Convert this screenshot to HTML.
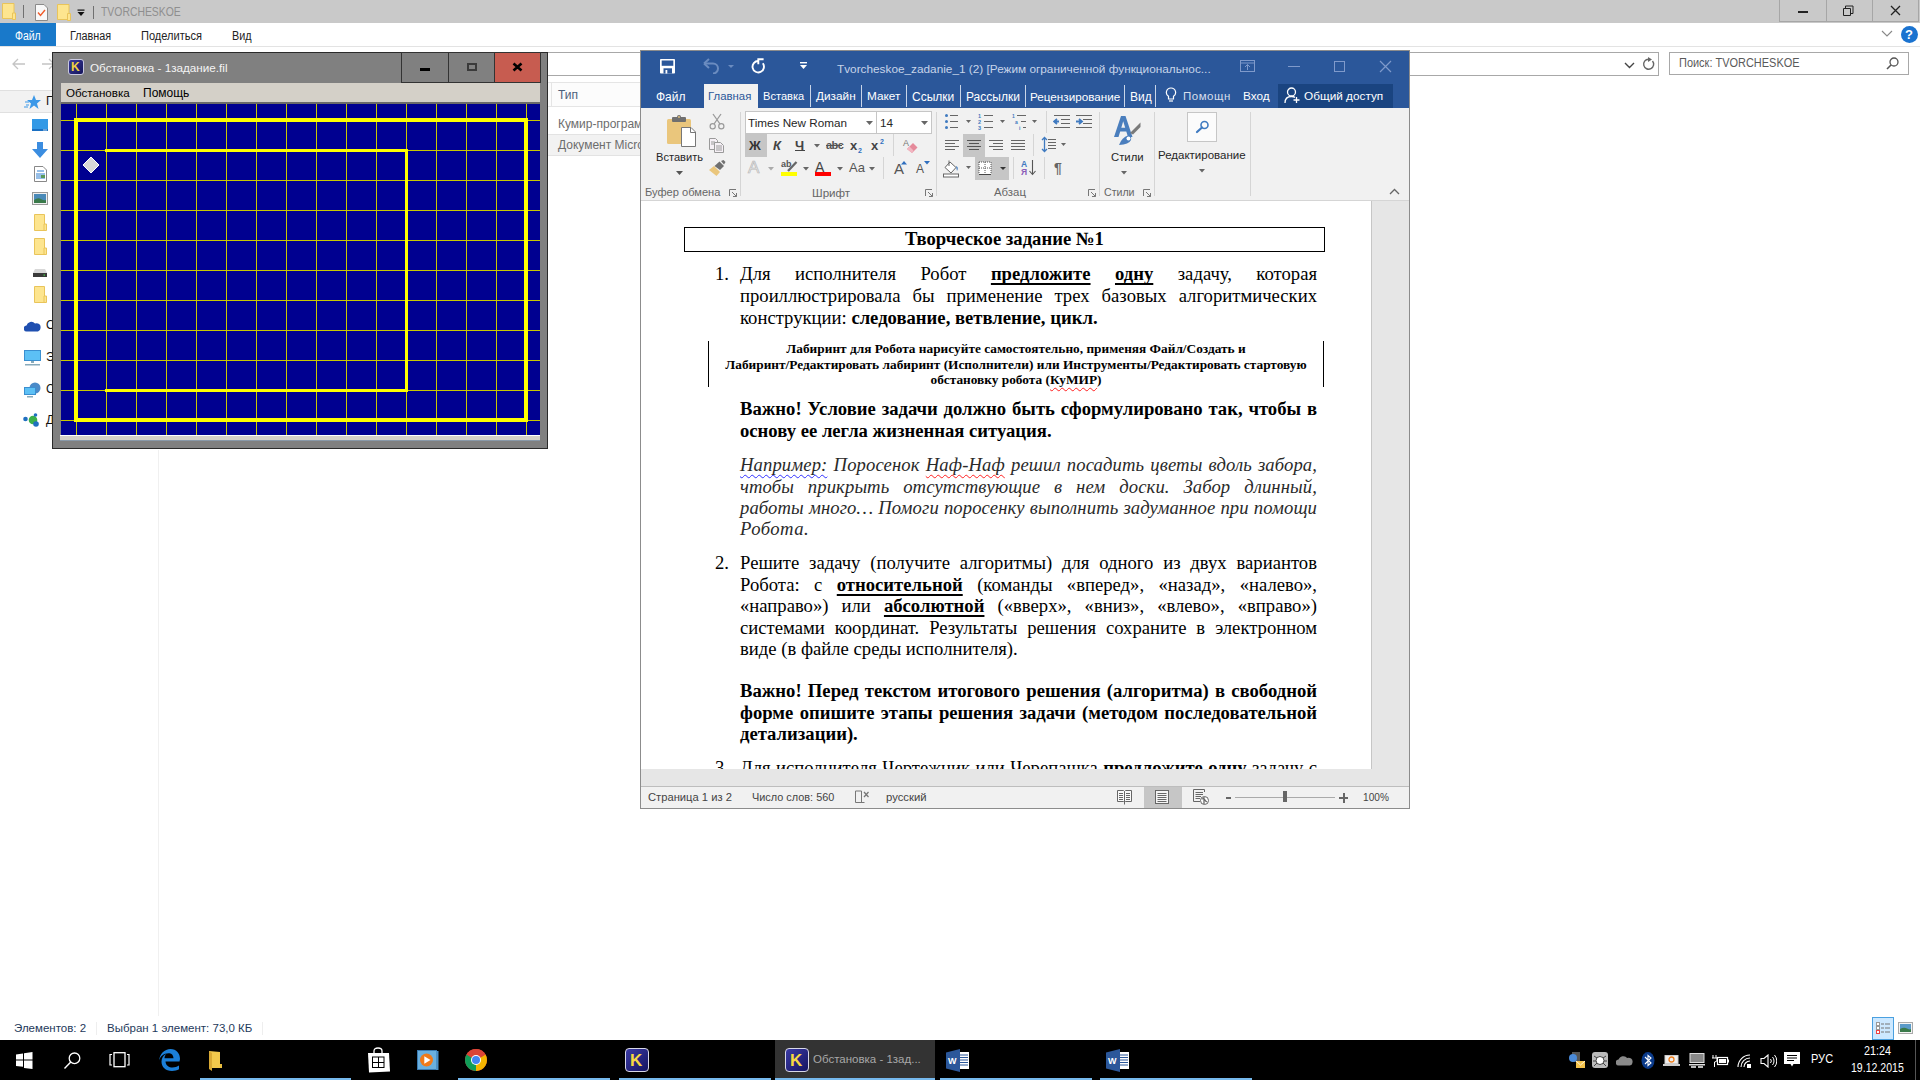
<!DOCTYPE html>
<html><head><meta charset="utf-8">
<style>
*{box-sizing:border-box;margin:0;padding:0}
html,body{width:1920px;height:1080px;overflow:hidden;background:#fff;font-family:"Liberation Sans",sans-serif;font-size:12px;color:#000}
.a{position:absolute}
.t{position:absolute;white-space:nowrap;line-height:1}
</style></head><body>
<!-- EXPLORER -->
<div class="a" style="left:0;top:0;width:1920px;height:23px;background:#c9c9c9"></div>
<svg class="a" style="left:1px;top:2px" width="100" height="19" viewBox="0 0 100 19">
<path d="M1.5 1.5H13V16.5H1.5Z" fill="#fde58f" stroke="#e9c45a"/><path d="M11.5 11H14.5V17.5H11.5Z" fill="#fde58f" stroke="#e9c45a"/>
<rect x="22" y="3" width="1" height="13" fill="#707070"/>
<path d="M34.5 2.5H43L46.5 6V18.5H34.5Z" fill="#f8f8f8" stroke="#8a8a8a"/><path d="M37 10.5L39.5 13.5L44 8" fill="none" stroke="#f05a28" stroke-width="1.4"/>
<path d="M56.5 2.5H68V17.5H56.5Z" fill="#fde58f" stroke="#e9c45a"/><path d="M66.5 11.5H69.5V18.5H66.5Z" fill="#fde58f" stroke="#e9c45a"/>
<rect x="76.5" y="7.5" width="7" height="1.2" fill="#111"/><path d="M76.5 10H83.5L80 14Z" fill="#111"/>
<rect x="92" y="4" width="1" height="13" fill="#707070"/>
</svg>
<div class="t" style="left:101px;top:5px;font-size:13px;color:#8f8f8f;transform:scaleX(0.8);transform-origin:0 0">TVORCHESKOE</div>
<!-- explorer window buttons -->
<div class="a" style="left:1779px;top:0;width:140px;height:22px;border:1px solid #a6a6a6;border-top:none"></div>
<div class="a" style="left:1826px;top:0;width:1px;height:22px;background:#a6a6a6"></div>
<div class="a" style="left:1872px;top:0;width:1px;height:22px;background:#a6a6a6"></div>
<div class="a" style="left:1798px;top:11px;width:10px;height:1.5px;background:#222"></div>
<svg class="a" style="left:1843px;top:5px" width="11" height="11" viewBox="0 0 11 11"><path d="M0.5 3.5H7.5V10.5H0.5Z" fill="none" stroke="#222"/><path d="M2.5 3.5V1H10V8.5H7.5" fill="none" stroke="#222"/></svg>
<svg class="a" style="left:1890px;top:5px" width="11" height="11" viewBox="0 0 11 11"><path d="M1 1L10 10M10 1L1 10" stroke="#222" stroke-width="1.3"/></svg>
<!-- ribbon tabs -->
<div class="a" style="left:0;top:23px;width:1920px;height:24px;background:#fff;border-bottom:1px solid #e3e3e3"></div>
<div class="a" style="left:0;top:23px;width:56px;height:23px;background:#1979ca"></div>
<div class="t" style="left:15px;top:30px;font-size:12px;color:#fff;transform:scaleX(0.87);transform-origin:0 0">Файл</div>
<div class="t" style="left:70px;top:30px;font-size:12px;color:#222;transform:scaleX(0.9);transform-origin:0 0">Главная</div>
<div class="t" style="left:141px;top:30px;font-size:12px;color:#222;transform:scaleX(0.92);transform-origin:0 0">Поделиться</div>
<div class="t" style="left:232px;top:30px;font-size:12px;color:#222;transform:scaleX(0.9);transform-origin:0 0">Вид</div>
<svg class="a" style="left:1881px;top:30px" width="12" height="7" viewBox="0 0 12 7"><path d="M1 1L6 6L11 1" fill="none" stroke="#888" stroke-width="1.1"/></svg>
<div class="a" style="left:1901px;top:26px;width:17px;height:17px;border-radius:50%;background:#1a73d0"></div>
<div class="t" style="left:1905px;top:28px;font-size:13px;font-weight:bold;color:#fff">?</div>
<!-- address -->
<svg class="a" style="left:12px;top:57px" width="42" height="14" viewBox="0 0 42 14"><path d="M1 7H13M6 2L1 7L6 12" fill="none" stroke="#c4c4c4" stroke-width="1.3"/><path d="M30 7H42M37 2L42 7L37 12" fill="none" stroke="#c4c4c4" stroke-width="1.3"/></svg>
<div class="a" style="left:540px;top:52px;width:1119px;height:24px;border:1px solid #a8a8a8;border-left:none"></div>
<svg class="a" style="left:1624px;top:62px" width="11" height="7" viewBox="0 0 11 7"><path d="M1 1L5.5 5.5L10 1" fill="none" stroke="#444" stroke-width="1.4"/></svg>
<svg class="a" style="left:1642px;top:57px" width="13" height="14" viewBox="0 0 13 14"><path d="M10.5 4A5 5 0 1 1 6.5 2.2" fill="none" stroke="#666" stroke-width="1.4"/><path d="M6 0L10 2.5L6 5Z" fill="#666"/></svg>
<div class="a" style="left:1669px;top:52px;width:240px;height:23px;border:1px solid #a8a8a8"></div>
<div class="t" style="left:1679px;top:57px;font-size:12.5px;color:#5a5a5a;transform:scaleX(0.877);transform-origin:0 0">Поиск: TVORCHESKOE</div>
<svg class="a" style="left:1886px;top:57px" width="13" height="13" viewBox="0 0 13 13"><circle cx="8" cy="5" r="4" fill="none" stroke="#555" stroke-width="1.3"/><path d="M5 8L1 12" stroke="#555" stroke-width="1.6"/></svg>
<!-- nav pane -->
<div class="a" style="left:158px;top:450px;width:1px;height:566px;background:#f0f0f0"></div>
<div class="a" style="left:0;top:90px;width:60px;height:23px;background:#f2f2f2;border:1px solid #e0e0e0;border-left:none"></div>
<svg class="a" style="left:24px;top:94px" width="18" height="16" viewBox="0 0 18 16"><path d="M10 1L12 6H17L13 9.5L14.5 15L10 11.5L5.5 15L7 9.5L3 6H8Z" fill="#3b98e8"/><path d="M1 8H5M2 11H5M0 13H4" stroke="#3b98e8" stroke-width="1"/></svg>
<div class="t" style="left:46px;top:95px;font-size:12px;color:#111">П</div>
<svg class="a" style="left:32px;top:119px" width="16" height="14" viewBox="0 0 16 14"><rect x="0" y="0" width="16" height="12" fill="#3399e6"/><rect x="0" y="10" width="16" height="2" fill="#1a6fc2"/><circle cx="12" cy="11" r="0.7" fill="#fff"/><circle cx="14" cy="11" r="0.7" fill="#fff"/></svg>
<svg class="a" style="left:32px;top:142px" width="16" height="16" viewBox="0 0 16 16"><path d="M5 0H11V7H16L8 16L0 7H5Z" fill="#3b8de0"/></svg>
<svg class="a" style="left:34px;top:166px" width="13" height="16" viewBox="0 0 13 16"><path d="M0.5 0.5H9L12.5 4V15.5H0.5Z" fill="#fff" stroke="#888"/><path d="M3 5H10M2 8H11M2 10H7M2 12H11" stroke="#2f7fd0"/><rect x="7" y="9" width="4" height="3" fill="#5a9a5a"/></svg>
<svg class="a" style="left:32px;top:192px" width="16" height="13" viewBox="0 0 16 13"><rect x="0.5" y="0.5" width="15" height="12" fill="#f0f0f0" stroke="#999"/><rect x="2" y="2" width="12" height="9" fill="#4a8ab8"/><path d="M2 8Q6 5 9 7T14 8V11H2Z" fill="#3a7a4a"/></svg>
<svg class="a" style="left:34px;top:214px" width="13" height="17" viewBox="0 0 13 17"><path d="M0.5 0.5H10.5V16.5H0.5Z" fill="#fde58f" stroke="#e9c45a"/><path d="M10 10H12.5V16.5H10Z" fill="#fde58f" stroke="#e9c45a"/></svg>
<svg class="a" style="left:34px;top:238px" width="13" height="17" viewBox="0 0 13 17"><path d="M0.5 0.5H10.5V16.5H0.5Z" fill="#fde58f" stroke="#e9c45a"/><path d="M10 10H12.5V16.5H10Z" fill="#fde58f" stroke="#e9c45a"/></svg>
<svg class="a" style="left:33px;top:268px" width="14" height="10" viewBox="0 0 14 10"><path d="M2 1H12L14 5V9H0V5Z" fill="#d8d8d8"/><rect x="0" y="5" width="14" height="4" fill="#3a3a3a"/><rect x="10.5" y="6.5" width="1.5" height="1.2" fill="#4c4"/></svg>
<svg class="a" style="left:34px;top:286px" width="13" height="17" viewBox="0 0 13 17"><path d="M0.5 0.5H10.5V16.5H0.5Z" fill="#fde58f" stroke="#e9c45a"/><path d="M10 10H12.5V16.5H10Z" fill="#fde58f" stroke="#e9c45a"/></svg>
<svg class="a" style="left:24px;top:319px" width="17" height="13" viewBox="0 0 17 13"><path d="M3 12.5A3 3 0 0 1 2.5 6.5A5 5 0 0 1 11 4.5A4 4 0 0 1 16.5 9A3.5 3.5 0 0 1 14 12.5Z" fill="#1f4fb0"/></svg>
<div class="t" style="left:46px;top:319px;font-size:12px;color:#111">О</div>
<svg class="a" style="left:24px;top:350px" width="17" height="16" viewBox="0 0 17 16"><rect x="0.5" y="0.5" width="16" height="10" fill="#5cc0f5" stroke="#3a8fd0"/><rect x="7" y="11" width="3" height="2" fill="#8ab"/><rect x="1" y="14" width="15" height="1.5" fill="#8ab"/></svg>
<div class="t" style="left:46px;top:351px;font-size:12px;color:#111">Э</div>
<svg class="a" style="left:24px;top:382px" width="17" height="16" viewBox="0 0 17 16"><circle cx="11" cy="6" r="5.5" fill="#4a8ac8"/><rect x="0.5" y="5.5" width="11" height="7" fill="#5cc0f5" stroke="#3a8fd0"/><rect x="3" y="14" width="6" height="1.5" fill="#8ab"/></svg>
<div class="t" style="left:46px;top:383px;font-size:12px;color:#111">С</div>
<svg class="a" style="left:23px;top:413px" width="18" height="14" viewBox="0 0 18 14"><circle cx="2.5" cy="6" r="2.3" fill="#1f6fc0"/><circle cx="10" cy="7" r="4.3" fill="#3cb04a"/><circle cx="12.5" cy="2" r="1.8" fill="#1f6fc0"/><circle cx="13" cy="11" r="2.8" fill="#1f6fc0"/></svg>
<div class="t" style="left:46px;top:414px;font-size:12px;color:#111">Д</div>
<!-- column header & rows -->
<div class="a" style="left:548px;top:82px;width:92px;height:25px;background:#fcfcfc;border-top:1px solid #e5e5e5;border-bottom:1px solid #e5e5e5"></div>
<div class="a" style="left:551px;top:82px;width:1px;height:24px;background:#e5e5e5"></div>
<div class="t" style="left:558px;top:89px;font-size:12px;color:#4c607a">Тип</div>
<div class="t" style="left:558px;top:118px;font-size:12px;color:#6d6d6d">Кумир-программа</div>
<div class="a" style="left:548px;top:134px;width:92px;height:22px;background:#f2f2f2;border-top:1px solid #e3e3e3;border-bottom:1px solid #e3e3e3"></div>
<div class="t" style="left:558px;top:139px;font-size:12px;color:#6d6d6d">Документ Microsoft</div>
<!-- status -->
<div class="t" style="left:14px;top:1023px;font-size:11.5px;color:#1e395b">Элементов: 2</div>
<div class="a" style="left:96px;top:1022px;width:1px;height:13px;background:#eee"></div>
<div class="t" style="left:107px;top:1023px;font-size:11.5px;color:#1e395b">Выбран 1 элемент: 73,0 КБ</div>
<div class="a" style="left:262px;top:1022px;width:1px;height:13px;background:#eee"></div>
<div class="a" style="left:1872px;top:1017px;width:22px;height:23px;background:#cce8ff;border:1px solid #4aa0e0"></div>
<svg class="a" style="left:1876px;top:1022px" width="14" height="12" viewBox="0 0 14 12"><rect x="0.5" y="0.5" width="3" height="3" fill="#fff" stroke="#999"/><rect x="0.5" y="4.5" width="3" height="3" fill="#fff" stroke="#999"/><rect x="0.5" y="8.5" width="3" height="3" fill="#fff" stroke="#e44"/><path d="M5 2H8M9 2H14M5 6H8M9 6H14M5 10H8M9 10H14" stroke="#777"/></svg>
<svg class="a" style="left:1898px;top:1022px" width="15" height="12" viewBox="0 0 15 12"><rect x="0.5" y="0.5" width="14" height="11" fill="#f4f4f4" stroke="#aaa"/><rect x="2" y="2" width="11" height="8" fill="#5a9ac8"/><path d="M2 7Q6 5 9 6.5T13 7V10H2Z" fill="#3a7a4a"/></svg>
<!-- TASKBAR -->
<div class="a" style="left:0;top:1040px;width:1920px;height:40px;background:#000"></div>
<svg class="a" style="left:16px;top:1052px" width="17" height="17" viewBox="0 0 17 17"><path d="M0 2.4L7 1.5V7.6H0Z M8 1.3L16.5 0V7.6H8Z M0 8.6H7V14.8L0 14Z M8 8.6H16.5V17L8 15.9Z" fill="#fff"/></svg>
<svg class="a" style="left:63px;top:1051px" width="19" height="19" viewBox="0 0 19 19"><circle cx="11.5" cy="7.3" r="5.3" fill="none" stroke="#fff" stroke-width="1.3"/><path d="M7.8 11L1.5 17.5" stroke="#fff" stroke-width="1.4"/></svg>
<svg class="a" style="left:109px;top:1052px" width="22" height="16" viewBox="0 0 22 16"><rect x="5" y="0.7" width="11" height="14" fill="none" stroke="#fff" stroke-width="1.3"/><path d="M3 2.5H1V13H3M18 2.5H20V13H18" fill="none" stroke="#fff" stroke-width="1.2"/></svg>
<svg class="a" style="left:159px;top:1049px" width="22" height="22" viewBox="0 0 22 22"><path d="M20.5 12.5H6.5C6.8 16.5 10 18.5 13.5 18.5C16 18.5 18.2 17.7 20 16.5V20.3C18 21.4 15.8 22 13 22C6.5 22 2.5 18 2.5 12.5C2.5 9 4.5 6 7.5 4.8C6 6.2 5.5 8 5.5 9.3H14.5C14.5 6.5 12.8 4.5 10.5 4.2C4.8 3.8 1 7.5 0.2 11.5C0.6 5 5.5 0 11.5 0C17.5 0 21 4.5 21 10Z" fill="#1b7fd8"/></svg>
<svg class="a" style="left:207px;top:1050px" width="17" height="22" viewBox="0 0 17 22"><path d="M2 1L13 2V18H2Z" fill="#f2c94c"/><path d="M2 1L5 3V21L2 19Z" fill="#d9a934"/><path d="M13 14H15V18H13Z" fill="#e9bd40"/></svg>
<div class="a" style="left:200px;top:1078px;width:151px;height:2px;background:#76b9ed"></div>
<svg class="a" style="left:367px;top:1047px" width="24" height="26" viewBox="0 0 24 26"><path d="M1 6H22L23 24.5L2 25.5Z" fill="#fff"/><path d="M7 6V4Q7 1 11 1Q15 1 15 4V6" fill="none" stroke="#fff" stroke-width="1.3"/><rect x="5" y="9.5" width="12.5" height="11.5" fill="#000"/><path d="M6 10.5H11V15H6ZM12 10.5H16.5V15H12ZM6 16H11V20H6ZM12 16H16.5V20H12Z" fill="#fff"/></svg>
<svg class="a" style="left:417px;top:1050px" width="22" height="21" viewBox="0 0 22 21"><rect x="0.5" y="0.5" width="19" height="19" fill="#6ab0e0" stroke="#3a7ab0"/><rect x="19" y="1" width="2.5" height="19" fill="#4a90c8"/><circle cx="9.5" cy="10" r="6.5" fill="#f07a1a"/><path d="M7.3 6.3L13.5 10L7.3 13.7Z" fill="#fff"/></svg>
<svg class="a" style="left:465px;top:1049px" width="22" height="22" viewBox="0 0 22 22"><circle cx="11" cy="11" r="11" fill="#db4437"/><path d="M11 11L1.5 5.5A11 11 0 0 0 11 22Z" fill="#0f9d58"/><path d="M11 11L11 22A11 11 0 0 0 20.5 5.5Z" fill="#f4b400"/><path d="M11 11L1.5 5.5A11 11 0 0 1 20.5 5.5Z" fill="#db4437"/><circle cx="11" cy="11" r="5" fill="#fff"/><circle cx="11" cy="11" r="4" fill="#4285f4"/></svg>
<div class="a" style="left:458px;top:1078px;width:152px;height:2px;background:#76b9ed"></div>
<div class="a" style="left:625px;top:1048px;width:24px;height:24px;border-radius:4px;background:linear-gradient(135deg,#3a3aa5,#151560);border:1.5px solid #d8d8e8"></div>
<div class="t" style="left:630px;top:1052px;font-size:17px;font-weight:bold;color:#f5d742">K</div>
<div class="a" style="left:619px;top:1078px;width:152px;height:2px;background:#76b9ed"></div>
<div class="a" style="left:775px;top:1040px;width:160px;height:40px;background:#333"></div>
<div class="a" style="left:785px;top:1048px;width:24px;height:24px;border-radius:4px;background:linear-gradient(135deg,#3a3aa5,#151560);border:1.5px solid #d8d8e8"></div>
<div class="t" style="left:790px;top:1052px;font-size:17px;font-weight:bold;color:#f5d742">K</div>
<div class="t" style="left:813px;top:1054px;font-size:11.5px;color:#a8a8a8">Обстановка - 1зад...</div>
<div class="a" style="left:775px;top:1078px;width:160px;height:2px;background:#76b9ed"></div>
<svg class="a" style="left:946px;top:1049px" width="24" height="23" viewBox="0 0 24 23"><path d="M9 3H23V20H9Z" fill="#fff"/><path d="M11 6H22M11 8.5H22M11 11H22M11 13.5H22M11 16H22" stroke="#2b579a" stroke-width="1"/><path d="M0 3.5L14 0V23L0 19.5Z" fill="#2b579a"/><text x="2" y="15" font-size="9" font-weight="bold" font-family="Liberation Sans" fill="#fff">W</text></svg>
<div class="a" style="left:940px;top:1078px;width:152px;height:2px;background:#76b9ed"></div>
<svg class="a" style="left:1106px;top:1049px" width="24" height="23" viewBox="0 0 24 23"><path d="M9 3H23V20H9Z" fill="#fff"/><path d="M11 6H22M11 8.5H22M11 11H22M11 13.5H22M11 16H22" stroke="#2b579a" stroke-width="1"/><path d="M0 3.5L14 0V23L0 19.5Z" fill="#2b579a"/><text x="2" y="15" font-size="9" font-weight="bold" font-family="Liberation Sans" fill="#fff">W</text></svg>
<div class="a" style="left:1100px;top:1078px;width:152px;height:2px;background:#76b9ed"></div>
<!-- tray -->
<svg class="a" style="left:1568px;top:1052px" width="17" height="16" viewBox="0 0 17 16"><rect x="4" y="0" width="8" height="10" fill="#555"/><circle cx="5" cy="6" r="4" fill="#4a8ad8"/><rect x="8" y="9" width="9" height="7" fill="#f3c24a"/><path d="M8 9L12.5 13L17 9" fill="none" stroke="#fff" stroke-width="0.8"/></svg>
<svg class="a" style="left:1592px;top:1052px" width="16" height="16" viewBox="0 0 16 16"><rect x="0" y="0" width="16" height="16" rx="3" fill="#bbb"/><circle cx="8" cy="8.5" r="4" fill="#fff" stroke="#444"/><path d="M2 4L5 6M14 4L11 6M1 9H4M15 9H12M2 14L5 11M14 14L11 11" stroke="#444"/></svg>
<svg class="a" style="left:1616px;top:1055px" width="17" height="11" viewBox="0 0 17 11"><path d="M3 10.5A3 3 0 0 1 2.5 4.5A5 5 0 0 1 11 3A4 4 0 0 1 16.5 7.5A3 3 0 0 1 14 10.5Z" fill="#8a8a8a"/></svg>
<svg class="a" style="left:1641px;top:1052px" width="14" height="17" viewBox="0 0 14 17"><ellipse cx="7" cy="8.5" rx="6.5" ry="8.5" fill="#0a3a8a"/><path d="M4 5L10 11L7 13.5V3.5L10 6L4 12" fill="none" stroke="#fff" stroke-width="1.1"/></svg>
<svg class="a" style="left:1663px;top:1055px" width="17" height="11" viewBox="0 0 17 11"><rect x="2" y="0.5" width="13" height="8" fill="#eee" stroke="#ccc"/><rect x="0" y="9" width="17" height="2" fill="#ccc"/><circle cx="8.5" cy="4.5" r="2.5" fill="none" stroke="#f08020" stroke-width="1.3"/></svg>
<svg class="a" style="left:1689px;top:1053px" width="16" height="15" viewBox="0 0 16 15"><rect x="1" y="0.5" width="14" height="9" fill="#888" stroke="#ddd"/><rect x="0" y="11" width="16" height="1.5" fill="#ddd"/><rect x="2" y="13" width="5" height="2" fill="#bbb"/><rect x="9" y="13" width="5" height="2" fill="#bbb"/></svg>
<svg class="a" style="left:1712px;top:1055px" width="17" height="12" viewBox="0 0 17 12"><rect x="5.5" y="2.5" width="10" height="7" fill="none" stroke="#fff" stroke-width="1.2"/><rect x="15.5" y="4.5" width="1.5" height="3" fill="#fff"/><rect x="7" y="4" width="7" height="4" fill="#fff"/><path d="M1 0V3M4 0V3M0 3H5V5Q5 7 2.5 7V12" fill="none" stroke="#fff" stroke-width="1"/></svg>
<svg class="a" style="left:1737px;top:1054px" width="15" height="14" viewBox="0 0 15 14"><path d="M1 13A12 12 0 0 1 13 1M4 13A9 9 0 0 1 13 4M7 13A6 6 0 0 1 13 7" fill="none" stroke="#fff" stroke-width="1.1"/><rect x="10" y="10" width="4" height="4" fill="#fff"/></svg>
<svg class="a" style="left:1760px;top:1054px" width="17" height="14" viewBox="0 0 17 14"><path d="M1 4.5H4L8 1V13L4 9.5H1Z" fill="none" stroke="#fff" stroke-width="1.1"/><path d="M10.5 5A3 3 0 0 1 10.5 9M12.5 3A6 6 0 0 1 12.5 11M14.5 1A9 9 0 0 1 14.5 13" fill="none" stroke="#fff" stroke-width="1"/></svg>
<svg class="a" style="left:1784px;top:1052px" width="17" height="17" viewBox="0 0 17 17"><path d="M0 0H16V12H9.5L8 14.5L6.5 12H0Z" fill="#fff"/><path d="M3 3.5H13M3 6H13M3 8.5H10" stroke="#000" stroke-width="1"/></svg>
<div class="t" style="left:1811px;top:1053px;font-size:12px;color:#fff;transform:scaleX(0.92);transform-origin:0 0">РУС</div>
<div class="t" style="left:1864px;top:1045px;font-size:12px;color:#fff;transform:scaleX(0.9);transform-origin:0 0">21:24</div>
<div class="t" style="left:1851px;top:1062px;font-size:12px;color:#fff;transform:scaleX(0.88);transform-origin:0 0">19.12.2015</div>
<div class="a" style="left:1915px;top:1040px;width:1px;height:40px;background:#555"></div>
<div class="a" style="left:52px;top:52px;width:496px;height:397px;background:#808080;border:1px solid #2a2a2a"></div>
<div class="a" style="left:68px;top:59px;width:16px;height:16px;border-radius:3px;background:linear-gradient(135deg,#3a3a9a,#14145a);border:1px solid #c8c8e0"></div>
<div class="t" style="left:71px;top:61px;font-size:12px;font-weight:bold;color:#f0d040">K</div>
<div class="t" style="left:90px;top:62px;font-size:11.7px;color:#f4f4f4">Обстановка - 1задание.fil</div>
<div class="a" style="left:401px;top:52px;width:48px;height:31px;border:1px solid #333;background:#808080"></div>
<div class="a" style="left:448px;top:52px;width:47px;height:31px;border:1px solid #333;background:#808080"></div>
<div class="a" style="left:494px;top:52px;width:47px;height:31px;border:1px solid #333;background:#c75c50"></div>
<div class="a" style="left:420px;top:68px;width:10px;height:3px;background:#000"></div>
<div class="a" style="left:467px;top:63px;width:10px;height:8px;border:2px solid #3a3a3a"></div>
<svg class="a" style="left:512px;top:62px" width="11" height="10"><path d="M1.5 1.5L9.5 8.5M9.5 1.5L1.5 8.5" stroke="#000" stroke-width="2.6"/></svg>
<div class="a" style="left:61px;top:83px;width:479px;height:19px;background:#d4d0c8"></div>
<div class="t" style="left:66px;top:87px;font-size:11.6px;color:#000">Обстановка</div>
<div class="t" style="left:143px;top:87px;font-size:12px;color:#000">Помощь</div>
<div class="a" style="left:61px;top:102px;width:479px;height:2px;background:#6a6a6a"></div>
<svg class="a" style="left:61px;top:104px" width="479" height="331" viewBox="0 0 479 331"><rect width="479" height="331" fill="#000090"/><rect x="15" y="0" width="1" height="331" fill="#c8c800"/><rect x="45" y="0" width="1" height="331" fill="#c8c800"/><rect x="75" y="0" width="1" height="331" fill="#c8c800"/><rect x="105" y="0" width="1" height="331" fill="#c8c800"/><rect x="135" y="0" width="1" height="331" fill="#c8c800"/><rect x="165" y="0" width="1" height="331" fill="#c8c800"/><rect x="195" y="0" width="1" height="331" fill="#c8c800"/><rect x="225" y="0" width="1" height="331" fill="#c8c800"/><rect x="255" y="0" width="1" height="331" fill="#c8c800"/><rect x="285" y="0" width="1" height="331" fill="#c8c800"/><rect x="315" y="0" width="1" height="331" fill="#c8c800"/><rect x="345" y="0" width="1" height="331" fill="#c8c800"/><rect x="375" y="0" width="1" height="331" fill="#c8c800"/><rect x="405" y="0" width="1" height="331" fill="#c8c800"/><rect x="435" y="0" width="1" height="331" fill="#c8c800"/><rect x="465" y="0" width="1" height="331" fill="#c8c800"/><rect x="0" y="16" width="479" height="1" fill="#c8c800"/><rect x="0" y="46" width="479" height="1" fill="#c8c800"/><rect x="0" y="76" width="479" height="1" fill="#c8c800"/><rect x="0" y="106" width="479" height="1" fill="#c8c800"/><rect x="0" y="136" width="479" height="1" fill="#c8c800"/><rect x="0" y="166" width="479" height="1" fill="#c8c800"/><rect x="0" y="196" width="479" height="1" fill="#c8c800"/><rect x="0" y="226" width="479" height="1" fill="#c8c800"/><rect x="0" y="256" width="479" height="1" fill="#c8c800"/><rect x="0" y="286" width="479" height="1" fill="#c8c800"/><rect x="0" y="316" width="479" height="1" fill="#c8c800"/><rect x="13" y="14" width="454" height="4" fill="#ffff00"/><rect x="13" y="314" width="454" height="4" fill="#ffff00"/><rect x="13" y="14" width="4" height="304" fill="#ffff00"/><rect x="463" y="14" width="4" height="304" fill="#ffff00"/><rect x="44" y="45" width="303" height="3" fill="#ffff00"/><rect x="44" y="285" width="303" height="3" fill="#ffff00"/><rect x="344" y="45" width="3" height="243" fill="#ffff00"/><path d="M30 53L38 61L30 69L22 61Z" fill="#d8d8d8" stroke="#fff" stroke-width="1"/></svg>
<div class="a" style="left:60px;top:435px;width:480px;height:6px;background:#d4d0c8;border-top:1px solid #fff;border-bottom:1px solid #8898a8"></div>

<!-- WORD -->
<div class="a" style="left:640px;top:50px;width:770px;height:759px;background:#f1f1f1;border:1px solid #8c8c8c"></div>
<div class="a" style="left:641px;top:51px;width:768px;height:57px;background:#2b579a"></div>
<!-- QAT -->
<svg class="a" style="left:660px;top:59px" width="15" height="15" viewBox="0 0 15 15"><rect x="0" y="0" width="15" height="14.5" rx="0.8" fill="#fff"/><rect x="1.7" y="1.5" width="11.6" height="5.3" fill="#2b579a"/><rect x="3.5" y="9.3" width="8.5" height="5.2" fill="#2b579a"/><rect x="5.5" y="11" width="1.8" height="3.5" fill="#fff"/></svg>
<svg class="a" style="left:703px;top:58px" width="34" height="16" viewBox="0 0 34 16"><path d="M2 5.5H10A5 5 0 0 1 10 15.5" fill="none" stroke="#6b8cc0" stroke-width="2"/><path d="M1 5.5L6 1M1 5.5L6 10" stroke="#6b8cc0" stroke-width="2" fill="none"/><path d="M25 7H31L28 10Z" fill="#6b8cc0"/></svg>
<svg class="a" style="left:750px;top:57px" width="16" height="17" viewBox="0 0 16 17"><path d="M8.3 4A5.7 5.7 0 1 0 12.8 6.3" fill="none" stroke="#fff" stroke-width="1.9"/><path d="M8.3 7.2V2.2H13.6" fill="none" stroke="#fff" stroke-width="1.9"/></svg>
<svg class="a" style="left:799px;top:61px" width="9" height="9" viewBox="0 0 9 9"><rect x="1" y="1" width="7" height="1.4" fill="#fff"/><path d="M1 4H8L4.5 8Z" fill="#fff"/></svg>
<div class="t" style="left:837px;top:64px;font-size:11.8px;color:#c7d4e9">Tvorcheskoe_zadanie_1 (2) [Режим ограниченной функциональнос...</div>
<!-- title buttons -->
<svg class="a" style="left:1240px;top:60px" width="15" height="12" viewBox="0 0 15 12"><rect x="0.5" y="0.5" width="14" height="11" fill="none" stroke="#7f9acb"/><line x1="0.5" y1="3" x2="14.5" y2="3" stroke="#7f9acb"/><path d="M7.5 4.5V10M5 7L7.5 4.5L10 7" fill="none" stroke="#7f9acb"/></svg>
<div class="a" style="left:1288px;top:66px;width:12px;height:1px;background:#7f9acb"></div>
<div class="a" style="left:1334px;top:61px;width:11px;height:11px;border:1px solid #7f9acb"></div>
<svg class="a" style="left:1379px;top:60px" width="13" height="13" viewBox="0 0 13 13"><path d="M1 1L12 12M12 1L1 12" stroke="#7f9acb" stroke-width="1.2"/></svg>
<!-- tabs -->
<div class="a" style="left:704px;top:84px;width:54px;height:24px;background:#f1f1f1"></div>
<div class="t" style="left:656px;top:91px;font-size:12px;color:#fff">Файл</div>
<div class="t" style="left:708px;top:91px;font-size:11.4px;color:#2b579a">Главная</div>
<div class="t" style="left:763px;top:91px;font-size:11.1px;color:#fff">Вставка</div>
<div class="t" style="left:816px;top:91px;font-size:11.8px;color:#fff">Дизайн</div>
<div class="t" style="left:867px;top:91px;font-size:11.8px;color:#fff">Макет</div>
<div class="t" style="left:912px;top:91px;font-size:12px;color:#fff">Ссылки</div>
<div class="t" style="left:966px;top:91px;font-size:12px;color:#fff">Рассылки</div>
<div class="t" style="left:1030px;top:91px;font-size:11.7px;color:#fff">Рецензирование</div>
<div class="t" style="left:1130px;top:91px;font-size:12px;color:#fff">Вид</div>
<div class="a" style="left:810px;top:85px;width:1px;height:22px;background:#c9d5e8"></div>
<div class="a" style="left:861px;top:85px;width:1px;height:22px;background:#c9d5e8"></div>
<div class="a" style="left:906px;top:85px;width:1px;height:22px;background:#c9d5e8"></div>
<div class="a" style="left:960px;top:85px;width:1px;height:22px;background:#c9d5e8"></div>
<div class="a" style="left:1025px;top:85px;width:1px;height:22px;background:#c9d5e8"></div>
<div class="a" style="left:1124px;top:85px;width:1px;height:22px;background:#c9d5e8"></div>
<div class="a" style="left:1155px;top:85px;width:1px;height:22px;background:#c9d5e8"></div>
<svg class="a" style="left:1165px;top:87px" width="12" height="16" viewBox="0 0 12 16"><path d="M6 1A4.5 4.5 0 0 0 3.5 9.3V12H8.5V9.3A4.5 4.5 0 0 0 6 1Z" fill="none" stroke="#fff" stroke-width="1.2"/><line x1="4" y1="14" x2="8" y2="14" stroke="#fff" stroke-width="1.2"/></svg>
<div class="t" style="left:1183px;top:91px;font-size:11.5px;color:#d8dfec;letter-spacing:0.5px">Помощн</div>
<div class="t" style="left:1243px;top:91px;font-size:11.8px;color:#fff">Вход</div>
<div class="a" style="left:1278px;top:84px;width:115px;height:24px;background:#1a4480"></div>
<svg class="a" style="left:1284px;top:87px" width="16" height="17" viewBox="0 0 16 17"><circle cx="7.5" cy="5" r="4" fill="none" stroke="#fff" stroke-width="1.3"/><path d="M1 16C1 11 4 9.5 7.5 9.5C9 9.5 10 9.8 11 10.4" fill="none" stroke="#fff" stroke-width="1.3"/><path d="M12.5 10V16M9.5 13H15.5" stroke="#fff" stroke-width="1.3"/></svg>
<div class="t" style="left:1304px;top:91px;font-size:11.8px;color:#fff">Общий доступ</div>
<!-- ribbon bottom border -->
<div class="a" style="left:641px;top:200px;width:768px;height:1px;background:#d5d5d5"></div>
<!-- document area -->
<div class="a" style="left:641px;top:201px;width:730px;height:568px;background:#fff;overflow:hidden" id="doc"></div>
<div class="a" style="left:1371px;top:201px;width:38px;height:568px;background:#e6e6e6;border-left:1px solid #c6c6c6"></div>
<div class="a" style="left:641px;top:769px;width:768px;height:17px;background:#e6e6e6"></div>
<div class="a" style="left:641px;top:786px;width:768px;height:22px;background:#f1f1f1;border-top:1px solid #bdbdbd"></div>
<div class="t" style="left:648px;top:792px;font-size:11.2px;color:#444">Страница 1 из 2</div>
<div class="t" style="left:752px;top:792px;font-size:10.9px;color:#444">Число слов: 560</div>
<svg class="a" style="left:855px;top:790px" width="15" height="14" viewBox="0 0 15 14"><path d="M0.5 1H6.5V12.5H0.5Z" fill="none" stroke="#777"/><path d="M6.5 1V13" stroke="#777"/><path d="M9 2L13.5 7M13.5 2L9 7" stroke="#777" stroke-width="1.3"/><path d="M7 12.5L9.5 12.5" stroke="#777"/></svg>
<div class="t" style="left:886px;top:792px;font-size:11.3px;color:#444">русский</div>
<svg class="a" style="left:1117px;top:789px" width="15" height="16" viewBox="0 0 15 16"><path d="M0.5 1.5H6.5L7.5 2.5L8.5 1.5H14.5V12.5H8.5L7.5 13.5L6.5 12.5H0.5Z" fill="#fafafa" stroke="#666"/><path d="M7.5 2.5V15.5M2 4.5H6M2 6.5H6M2 8.5H6M2 10.5H6M9 4.5H13M9 6.5H13M9 8.5H13M9 10.5H13" stroke="#666"/></svg>
<div class="a" style="left:1144px;top:787px;width:38px;height:21px;background:#c6c6c6"></div>
<svg class="a" style="left:1155px;top:790px" width="15" height="14" viewBox="0 0 15 14"><rect x="0.5" y="0.5" width="13" height="13" fill="#f4f4f4" stroke="#666"/><path d="M2.5 3.5H11.5M2.5 5.5H11.5M2.5 7.5H11.5M2.5 9.5H11.5M2.5 11.5H11.5" stroke="#666"/></svg>
<svg class="a" style="left:1193px;top:789px" width="16" height="16" viewBox="0 0 16 16"><path d="M0.5 0.5H11.5V3" fill="none" stroke="#666"/><path d="M0.5 0.5V12.5H7" fill="none" stroke="#666"/><path d="M2.5 3.5H10M2.5 5.5H10M2.5 7.5H8M2.5 9.5H7" stroke="#666"/><circle cx="11.5" cy="11.5" r="4" fill="#fff" stroke="#666"/><path d="M9 10Q11 9 12 11T14 12.5M11 8V15" fill="none" stroke="#666" stroke-width="1.3"/></svg>
<div class="a" style="left:1226px;top:797px;width:5px;height:2px;background:#666"></div>
<div class="a" style="left:1235px;top:797px;width:100px;height:1px;background:#aaa"></div>
<div class="a" style="left:1283px;top:791px;width:4px;height:11px;background:#666"></div>
<div class="a" style="left:1339px;top:797px;width:9px;height:2px;background:#666"></div>
<div class="a" style="left:1343px;top:793px;width:2px;height:10px;background:#666"></div>
<div class="t" style="left:1363px;top:792px;font-size:11px;color:#444;transform:scaleX(0.92);transform-origin:0 0">100%</div>
<!-- RIBBON -->
<!-- clipboard group -->
<svg class="a" style="left:665px;top:114px" width="32" height="34" viewBox="0 0 32 34"><rect x="2" y="5" width="24" height="25" rx="1.5" fill="#eac67c"/><rect x="7" y="3" width="14" height="5" rx="1" fill="#6f6f6f"/><circle cx="14" cy="3" r="2" fill="#6f6f6f"/><circle cx="14" cy="3" r="0.9" fill="#eac67c"/><path d="M16.5 13.5H26L30.5 18V32.5H16.5Z" fill="#fff" stroke="#777"/><path d="M25.5 13.5V18.5H30.5" fill="none" stroke="#777"/></svg>
<div class="t" style="left:656px;top:152px;font-size:11.1px;color:#262626">Вставить</div>
<svg class="a" style="left:676px;top:171px" width="7" height="4"><path d="M0 0H7L3.5 4Z" fill="#555"/></svg>
<svg class="a" style="left:709px;top:113px" width="16" height="17" viewBox="0 0 16 17"><path d="M4 1L11 11M12 1L5 11" stroke="#9a9a9a" stroke-width="1.3"/><circle cx="3.7" cy="13.3" r="2.6" fill="none" stroke="#9a9a9a" stroke-width="1.2"/><circle cx="12.3" cy="13.3" r="2.6" fill="none" stroke="#9a9a9a" stroke-width="1.2"/></svg>
<svg class="a" style="left:708px;top:137px" width="17" height="17" viewBox="0 0 17 17"><path d="M1.5 1.5H7.5L9.5 3.5V12.5H1.5Z" fill="#f6f0f6" stroke="#9a9a9a"/><path d="M6.5 5.5H12.5L15.5 8.5V15.5H6.5Z" fill="#f6f0f6" stroke="#9a9a9a"/><path d="M3 5H7M3 7H7M8 9H14M8 11H14M8 13H14" stroke="#9a9a9a"/></svg>
<svg class="a" style="left:708px;top:160px" width="18" height="17" viewBox="0 0 18 17"><path d="M1 10L6 6L12 12L8.5 16Z" fill="#eac67c"/><path d="M6.5 6L11.5 1.5L16 6L12 10Z" fill="#707070"/><path d="M13 1L15.5 0L17.5 2L16 4.5Z" fill="#707070"/></svg>
<div class="t" style="left:645px;top:187px;font-size:11.1px;color:#666">Буфер обмена</div>
<svg class="a" style="left:729px;top:189px" width="8" height="8" viewBox="0 0 8 8"><path d="M0.5 7V0.5H7" fill="none" stroke="#777"/><path d="M3 3L7.5 7.5M7.5 4V7.5H4" fill="none" stroke="#777"/></svg>
<div class="a" style="left:740px;top:112px;width:1px;height:84px;background:#d5d5d5"></div>
<!-- font group -->
<div class="a" style="left:745px;top:111px;width:132px;height:23px;background:#fff;border:1px solid #c6c6c6"></div>
<div class="a" style="left:876px;top:111px;width:56px;height:23px;background:#fff;border:1px solid #c6c6c6"></div>
<div class="t" style="left:748px;top:117px;font-size:11.7px;color:#262626">Times New Roman</div>
<div class="t" style="left:880px;top:117px;font-size:11.7px;color:#262626">14</div>
<svg class="a" style="left:866px;top:121px" width="7" height="4"><path d="M0 0H7L3.5 4Z" fill="#666"/></svg>
<svg class="a" style="left:921px;top:121px" width="7" height="4"><path d="M0 0H7L3.5 4Z" fill="#666"/></svg>
<div class="a" style="left:745px;top:134px;width:22px;height:23px;background:#c6c6c6"></div>
<div class="t" style="left:749px;top:139px;font-size:13px;font-weight:bold;color:#333">Ж</div>
<div class="t" style="left:773px;top:139px;font-size:13px;font-weight:bold;font-style:italic;color:#444">К</div>
<div class="t" style="left:795px;top:139px;font-size:13px;font-weight:bold;color:#444">Ч</div>
<div class="a" style="left:795px;top:150px;width:10px;height:1px;background:#444"></div>
<svg class="a" style="left:814px;top:144px" width="6" height="4"><path d="M0 0H6L3 3.5Z" fill="#666"/></svg>
<div class="t" style="left:826px;top:140px;font-size:11px;font-weight:bold;color:#555;letter-spacing:-0.6px">abc</div>
<div class="a" style="left:826px;top:145px;width:16px;height:1px;background:#555"></div>
<div class="t" style="left:850px;top:139px;font-size:13px;font-weight:bold;color:#444">x</div>
<div class="t" style="left:858px;top:147px;font-size:7px;font-weight:bold;color:#2f6fbf">2</div>
<div class="t" style="left:871px;top:139px;font-size:13px;font-weight:bold;color:#444">x</div>
<div class="t" style="left:880px;top:138px;font-size:7px;font-weight:bold;color:#2f6fbf">2</div>
<div class="a" style="left:893px;top:134px;width:1px;height:22px;background:#d5d5d5"></div>
<svg class="a" style="left:902px;top:137px" width="17" height="17" viewBox="0 0 17 17"><text x="1" y="9" font-size="9" font-family="Liberation Sans" fill="#777">A</text><path d="M5 12L11 6L15.5 10.5L10 16Z" fill="#e58a9a"/><path d="M5 12L7.5 9.5L11.5 13.5L10 16Z" fill="#f2b6c1"/></svg>
<!-- row 3 -->
<div class="t" style="left:748px;top:159px;font-size:17px;color:#f4f4f4;-webkit-text-stroke:0.7px #b8b8b8">A</div>
<svg class="a" style="left:768px;top:167px" width="6" height="4"><path d="M0 0H6L3 3.5Z" fill="#aaa"/></svg>
<div class="t" style="left:781px;top:160px;font-size:9px;font-weight:bold;color:#555">ab</div>
<svg class="a" style="left:784px;top:160px" width="14" height="12" viewBox="0 0 14 12"><path d="M4 11L12.5 2" stroke="#666" stroke-width="2.3"/></svg>
<div class="a" style="left:781px;top:172px;width:16px;height:4px;background:#ffff00"></div>
<svg class="a" style="left:803px;top:167px" width="6" height="4"><path d="M0 0H6L3 3.5Z" fill="#666"/></svg>
<div class="t" style="left:815px;top:160px;font-size:14px;color:#444">A</div>
<div class="a" style="left:815px;top:172px;width:16px;height:4px;background:#ff0000"></div>
<svg class="a" style="left:837px;top:167px" width="6" height="4"><path d="M0 0H6L3 3.5Z" fill="#666"/></svg>
<div class="t" style="left:849px;top:161px;font-size:13px;color:#555">Aa</div>
<svg class="a" style="left:869px;top:167px" width="6" height="4"><path d="M0 0H6L3 3.5Z" fill="#666"/></svg>
<div class="a" style="left:883px;top:157px;width:1px;height:22px;background:#d5d5d5"></div>
<div class="t" style="left:894px;top:161px;font-size:15px;color:#555">A</div>
<svg class="a" style="left:901px;top:161px" width="6" height="4"><path d="M0 3.5H6L3 0Z" fill="#2f6fbf"/></svg>
<div class="t" style="left:916px;top:163px;font-size:12px;color:#555">A</div>
<svg class="a" style="left:924px;top:161px" width="6" height="4"><path d="M0 0H6L3 3.5Z" fill="#2f6fbf"/></svg>
<div class="t" style="left:812px;top:187px;font-size:11.6px;color:#666">Шрифт</div>
<svg class="a" style="left:925px;top:189px" width="8" height="8" viewBox="0 0 8 8"><path d="M0.5 7V0.5H7" fill="none" stroke="#777"/><path d="M3 3L7.5 7.5M7.5 4V7.5H4" fill="none" stroke="#777"/></svg>
<div class="a" style="left:936px;top:112px;width:1px;height:84px;background:#d5d5d5"></div>
<!-- paragraph group -->
<svg class="a" style="left:944px;top:113px" width="95" height="18" viewBox="0 0 95 18">
<g fill="#3f7ac0"><circle cx="2.5" cy="2.5" r="1.5"/><circle cx="2.5" cy="8.5" r="1.5"/><circle cx="2.5" cy="14.5" r="1.5"/></g>
<path d="M6 2.5H14M6 8.5H14M6 14.5H14" stroke="#666"/>
<path d="M22 7H27L24.5 10Z" fill="#666"/>
<text x="34" y="5" font-size="5.5" font-weight="bold" font-family="Liberation Sans" fill="#3f7ac0">1</text><text x="34" y="11" font-size="5.5" font-weight="bold" font-family="Liberation Sans" fill="#3f7ac0">2</text><text x="34" y="17" font-size="5.5" font-weight="bold" font-family="Liberation Sans" fill="#3f7ac0">3</text>
<path d="M40 2.5H49M40 8.5H49M40 14.5H49" stroke="#666"/>
<path d="M56 7H61L58.5 10Z" fill="#666"/>
<text x="68" y="5" font-size="5" font-weight="bold" font-family="Liberation Sans" fill="#3f7ac0">1</text><text x="71" y="11" font-size="5" font-weight="bold" font-family="Liberation Sans" fill="#3f7ac0">a</text><text x="75" y="17" font-size="5" font-weight="bold" font-family="Liberation Sans" fill="#3f7ac0">i</text>
<path d="M73 2.5H82M77 8.5H82M79 14.5H82" stroke="#666"/>
<path d="M88 7H93L90.5 10Z" fill="#666"/>
</svg>
<div class="a" style="left:1046px;top:111px;width:1px;height:22px;background:#d5d5d5"></div>
<svg class="a" style="left:1053px;top:114px" width="42" height="15" viewBox="0 0 42 15">
<path d="M1 1.5H17M8 5.5H17M8 9.5H17M1 13.5H17" stroke="#666" stroke-width="1.2"/>
<path d="M1 7.5H6M4 5L1 7.5L4 10" fill="none" stroke="#3f7ac0" stroke-width="1.8"/>
<path d="M23 1.5H39M30 5.5H39M30 9.5H39M23 13.5H39" stroke="#666" stroke-width="1.2"/>
<path d="M23 7.5H28M26 5L29 7.5L26 10" fill="none" stroke="#3f7ac0" stroke-width="1.8"/>
</svg>
<div class="a" style="left:963px;top:134px;width:22px;height:23px;background:#c6c6c6"></div>
<svg class="a" style="left:944px;top:139px" width="84" height="13" viewBox="0 0 84 13">
<path d="M1 1.5H15M1 4.5H11M1 7.5H15M1 10.5H11" stroke="#666" stroke-width="1.1"/>
<path d="M23 1.5H37M25 4.5H35M23 7.5H37M25 10.5H35" stroke="#555" stroke-width="1.1"/>
<path d="M45 1.5H59M49 4.5H59M45 7.5H59M49 10.5H59" stroke="#666" stroke-width="1.1"/>
<path d="M67 1.5H81M67 4.5H81M67 7.5H81M67 10.5H81" stroke="#666" stroke-width="1.1"/>
</svg>
<div class="a" style="left:1033px;top:134px;width:1px;height:22px;background:#d5d5d5"></div>
<svg class="a" style="left:1041px;top:136px" width="27" height="17" viewBox="0 0 27 17">
<path d="M3.5 1.5V15.5M1 4L3.5 1.5L6 4M1 13L3.5 15.5L6 13" fill="none" stroke="#3f7ac0" stroke-width="1.3"/>
<path d="M7 3.5H15M7 6.5H15M7 9.5H15M7 12.5H15" stroke="#666" stroke-width="1.1"/>
<path d="M20 7H25L22.5 10Z" fill="#666"/>
</svg>
<div class="a" style="left:975px;top:157px;width:34px;height:23px;background:#c6c6c6"></div>
<svg class="a" style="left:943px;top:159px" width="31" height="19" viewBox="0 0 31 19">
<path d="M7 3L13 8.5L8 14L2 8.5Z" fill="#fff" stroke="#666"/><path d="M6 1.5V7" stroke="#666"/><path d="M13 7Q16 8 14 12" fill="#3f7ac0"/><rect x="0.5" y="15" width="15" height="3" fill="#fff" stroke="#666"/>
<path d="M23 7H28L25.5 10Z" fill="#666"/>
</svg>
<svg class="a" style="left:978px;top:161px" width="30" height="15" viewBox="0 0 30 15">
<rect x="1" y="1" width="12" height="12" fill="#fff"/>
<path d="M1 1H13M1 7H13M1 1V13M7 1V13M13 1V13" stroke="#555" stroke-width="1" stroke-dasharray="1 1"/>
<path d="M1 13.5H13" stroke="#444" stroke-width="1"/>
<path d="M22 6H28L25 9Z" fill="#333"/>
</svg>
<div class="a" style="left:1013px;top:157px;width:1px;height:22px;background:#d5d5d5"></div>
<svg class="a" style="left:1021px;top:159px" width="17" height="18" viewBox="0 0 17 18">
<text x="0" y="8" font-size="8.5" font-weight="bold" font-family="Liberation Sans" fill="#3f7ac0">A</text>
<text x="0" y="16" font-size="8.5" font-weight="bold" font-family="Liberation Sans" fill="#8a5cb8">Я</text>
<path d="M11.5 1V15M8.5 12L11.5 15.5L14.5 12" fill="none" stroke="#555" stroke-width="1.1"/>
</svg>
<div class="a" style="left:1044px;top:157px;width:1px;height:22px;background:#d5d5d5"></div>
<div class="t" style="left:1054px;top:161px;font-size:14px;font-weight:bold;color:#666">¶</div>
<div class="t" style="left:994px;top:187px;font-size:11.4px;color:#666">Абзац</div>
<svg class="a" style="left:1088px;top:189px" width="8" height="8" viewBox="0 0 8 8"><path d="M0.5 7V0.5H7" fill="none" stroke="#777"/><path d="M3 3L7.5 7.5M7.5 4V7.5H4" fill="none" stroke="#777"/></svg>
<div class="a" style="left:1099px;top:112px;width:1px;height:84px;background:#d5d5d5"></div>
<!-- styles -->
<svg class="a" style="left:1113px;top:115px" width="31" height="32" viewBox="0 0 31 32">
<path d="M1 22L8 1H12.5L19.5 22H15L13.3 16.5H7.2L5.5 22ZM8.3 12.8H12.2L10.2 6.2Z" fill="#4a7ebd"/>
<path d="M17 18L27.5 7.5V12L20 19.5Z" fill="#7a7a7a"/>
<path d="M6 30Q9 22 15 20.5Q19 20 18 25Q16 29.5 6 30Z" fill="#4a7ebd"/>
<circle cx="15.5" cy="23.5" r="2" fill="#fff"/>
</svg>
<div class="t" style="left:1111px;top:152px;font-size:11.3px;color:#262626">Стили</div>
<svg class="a" style="left:1121px;top:171px" width="6" height="4"><path d="M0 0H6L3 3.5Z" fill="#666"/></svg>
<div class="t" style="left:1104px;top:187px;font-size:10.6px;color:#666">Стили</div>
<svg class="a" style="left:1143px;top:189px" width="8" height="8" viewBox="0 0 8 8"><path d="M0.5 7V0.5H7" fill="none" stroke="#777"/><path d="M3 3L7.5 7.5M7.5 4V7.5H4" fill="none" stroke="#777"/></svg>
<div class="a" style="left:1154px;top:112px;width:1px;height:84px;background:#d5d5d5"></div>
<!-- editing -->
<div class="a" style="left:1187px;top:112px;width:30px;height:30px;background:#fbfbfb;border:1px solid #c6c6c6"></div>
<svg class="a" style="left:1195px;top:120px" width="15" height="14" viewBox="0 0 15 14"><circle cx="9.5" cy="5" r="3.5" fill="none" stroke="#3f7ac0" stroke-width="1.6"/><path d="M7 7.5L2 12" stroke="#3f7ac0" stroke-width="2.2" stroke-linecap="round"/></svg>
<div class="t" style="left:1158px;top:150px;font-size:11.5px;color:#262626">Редактирование</div>
<svg class="a" style="left:1199px;top:169px" width="6" height="4"><path d="M0 0H6L3 3.5Z" fill="#666"/></svg>
<div class="a" style="left:1250px;top:112px;width:1px;height:84px;background:#d5d5d5"></div>
<svg class="a" style="left:1389px;top:188px" width="11" height="7" viewBox="0 0 11 7"><path d="M1 6L5.5 1.5L10 6" fill="none" stroke="#666" stroke-width="1.3"/></svg>
<!-- DOC -->
<div class="a" style="left:641px;top:201px;width:730px;height:568px;overflow:hidden">
<div class="a" style="left:-641px;top:-201px;width:1920px;height:1080px">
<style>.dl{position:absolute;white-space:nowrap;font-family:"Liberation Serif",serif;font-size:18.67px;line-height:22px;color:#000}.dl b{font-weight:bold}.u{text-decoration:underline;text-decoration-skip-ink:none;text-decoration-thickness:2px;text-underline-offset:2.5px}.it{font-style:italic;letter-spacing:0.1px;color:#2a2a2a}.sqb{text-decoration-skip-ink:none;text-decoration:underline wavy #3030ff;text-decoration-thickness:1px;text-underline-offset:3px}.sqr{text-decoration-skip-ink:none;text-decoration:underline wavy #ff2020;text-decoration-thickness:1px;text-underline-offset:3px}.lab{font-size:13.33px;line-height:16px;font-weight:bold;text-align:center}</style>
<div class="a" style="left:684px;top:227px;width:641px;height:25px;border:1px solid #000"></div>
<div class="dl" style="left:684px;top:228.0px;width:641px;text-align:center;"><b>Творческое задание №1</b></div>
<div class="dl" style="left:715px;top:263.0px;width:20px;">1.</div>
<div class="dl" style="left:740px;top:263.0px;width:577px;text-align:justify;text-align-last:justify;">Для исполнителя Робот <b class="u">предложите</b> <b class="u">одну</b> задачу, которая</div>
<div class="dl" style="left:740px;top:285.0px;width:577px;text-align:justify;text-align-last:justify;">проиллюстрировала бы применение трех базовых алгоритмических</div>
<div class="dl" style="left:740px;top:307.0px;width:577px;">конструкции: <b>следование, ветвление, цикл.</b></div>
<div class="a" style="left:708px;top:341px;width:1px;height:46px;background:#000"></div>
<div class="a" style="left:1323px;top:341px;width:1px;height:46px;background:#000"></div>
<div class="dl lab" style="left:709px;top:341.0px;width:614px">Лабиринт для Робота нарисуйте самостоятельно, применяя Файл/Создать и</div>
<div class="dl lab" style="left:709px;top:357.0px;width:614px">Лабиринт/Редактировать лабиринт (Исполнители) или Инструменты/Редактировать стартовую</div>
<div class="dl lab" style="left:709px;top:372.0px;width:614px">обстановку робота (<span class="sqr">КуМИР</span>)</div>
<div class="dl" style="left:740px;top:398.0px;width:577px;text-align:justify;text-align-last:justify;"><b>Важно! Условие задачи должно быть сформулировано так, чтобы в</b></div>
<div class="dl" style="left:740px;top:420.0px;width:577px;"><b>основу ее легла жизненная ситуация.</b></div>
<div class="dl it" style="left:740px;top:454.0px;width:577px;text-align:justify;text-align-last:justify;"><span class="sqb">Например:</span> Поросенок <span class="sqr">Наф-Наф</span> решил посадить цветы вдоль забора,</div>
<div class="dl it" style="left:740px;top:476.0px;width:577px;text-align:justify;text-align-last:justify;">чтобы прикрыть отсутствующие в нем доски. Забор длинный,</div>
<div class="dl it" style="left:740px;top:497.0px;width:577px;text-align:justify;text-align-last:justify;">работы много… Помоги поросенку выполнить задуманное при помощи</div>
<div class="dl it" style="left:740px;top:518.0px;width:577px;letter-spacing:0.45px;">Робота.</div>
<div class="dl" style="left:715px;top:552.0px;width:20px;">2.</div>
<div class="dl" style="left:740px;top:552.0px;width:577px;text-align:justify;text-align-last:justify;">Решите задачу (получите алгоритмы) для одного из двух вариантов</div>
<div class="dl" style="left:740px;top:574.0px;width:577px;text-align:justify;text-align-last:justify;">Робота: с <b class="u">относительной</b> (команды «вперед», «назад», «налево»,</div>
<div class="dl" style="left:740px;top:595.0px;width:577px;text-align:justify;text-align-last:justify;">«направо») или <b class="u">абсолютной</b> («вверх», «вниз», «влево», «вправо»)</div>
<div class="dl" style="left:740px;top:617.0px;width:577px;text-align:justify;text-align-last:justify;">системами координат. Результаты решения сохраните в электронном</div>
<div class="dl" style="left:740px;top:638.0px;width:577px;">виде (в файле среды исполнителя).</div>
<div class="dl" style="left:740px;top:680.0px;width:577px;text-align:justify;text-align-last:justify;"><b>Важно! Перед текстом итогового решения (алгоритма) в свободной</b></div>
<div class="dl" style="left:740px;top:702.0px;width:577px;text-align:justify;text-align-last:justify;"><b>форме опишите этапы решения задачи (методом последовательной</b></div>
<div class="dl" style="left:740px;top:723.0px;width:577px;"><b>детализации).</b></div>
<div class="dl" style="left:715px;top:757.0px;width:20px;">3.</div>
<div class="dl" style="left:740px;top:757.0px;width:577px;text-align:justify;text-align-last:justify;">Для исполнителя Чертежник или Черепашка <b class="u">предложите одну</b> задачу с</div>
</div></div>
</body></html>
